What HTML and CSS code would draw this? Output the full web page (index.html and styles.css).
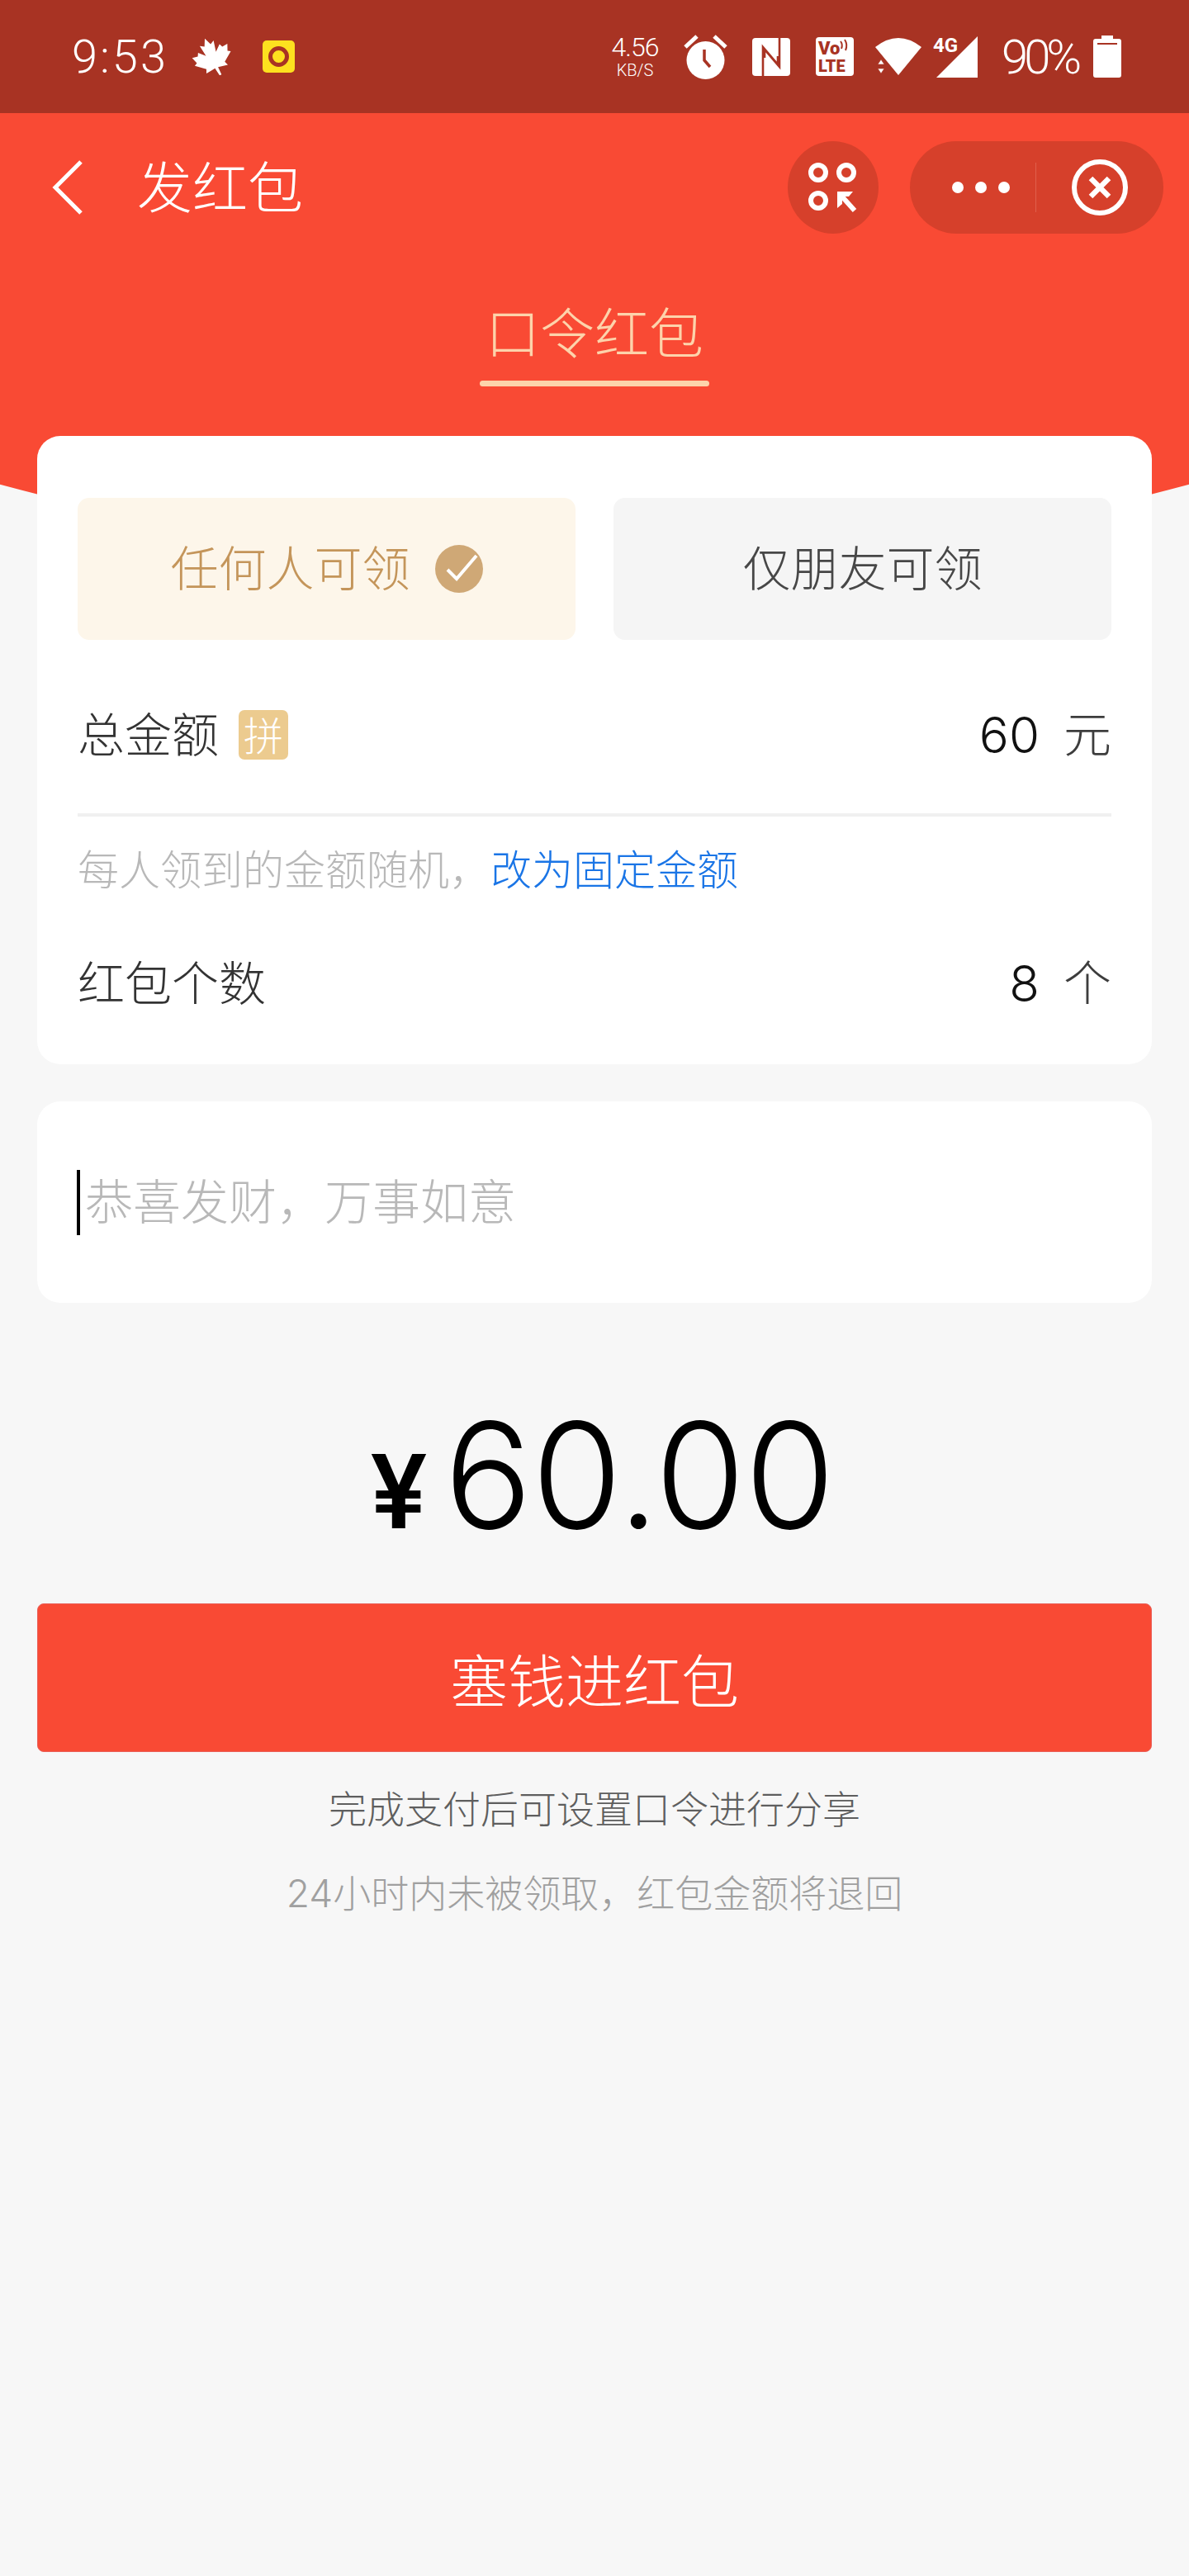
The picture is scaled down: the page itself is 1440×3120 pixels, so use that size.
FILE: index.html
```html
<!DOCTYPE html>
<html lang="zh-CN">
<head>
  <meta charset="UTF-8">
  <meta name="viewport" content="width=device-width, initial-scale=1.0">
  <title>发红包</title>
  <link rel="stylesheet" href="styles.css">
</head>
<body>
  <div class="hero">
    <div class="status">
      <div class="status-left">
        <span class="time">9:53</span>
        <svg class="leaf" viewBox="0 0 100 100"><path transform="rotate(-22 50 50)" d="M50 2 L58 20 L68 14 L63 42 L78 28 L82 36 L96 34 L90 50 L97 54 L74 72 L78 82 L54 78 L55 98 L50 98 L46 78 L22 82 L26 72 L3 54 L10 50 L4 34 L18 36 L22 28 L37 42 L32 14 L42 20 Z"/></svg>
        <svg class="app-dot" viewBox="0 0 39 39"><rect width="39" height="39" rx="5" fill="#fde11f"/><circle cx="19.5" cy="19.5" r="10" fill="#fde11f" stroke="#a83323" stroke-width="5"/></svg>
      </div>
      <div class="status-right">
        <div class="speed"><span class="speed-num">4.56</span><span class="speed-unit">KB/S</span></div>
        <svg class="alarm" viewBox="0 0 53 54"><circle cx="26.5" cy="31" r="23" fill="#fff"/><path d="M2 15 L16 2 M51 15 L37 2" stroke="#fff" stroke-width="5" fill="none"/><path d="M25 18 V31 L32 39" stroke="#a83323" stroke-width="3.5" fill="none"/></svg>
        <svg class="nfc" viewBox="0 0 46 46"><rect width="46" height="46" rx="4" fill="#fff"/><path d="M13 46 V11 L31 32 V22 M33 0 V35 L15 14 V24" stroke="#a83323" stroke-width="2.6" fill="none"/></svg>
        <svg class="volte" viewBox="0 0 46 47"><rect width="46" height="47" rx="4" fill="#fff"/><text x="3" y="21" class="volte-top">Vo</text><path d="M30 5 Q33 9 31 14 M35 3 Q39 9 36 16" stroke="#a83323" stroke-width="2" fill="none"/><text x="3" y="42" class="volte-bottom">LTE</text></svg>
        <svg class="wifi" viewBox="0 0 56 46"><path d="M28 45 L0 11 Q28 -11 56 11 Z" fill="#fff"/><path d="M7 26 L11 32 H3 Z M3 37 H11 L7 43 Z" fill="#fff" stroke="#a83323" stroke-width="0.6"/></svg>
        <div class="signal">
          <svg class="signal-bars" viewBox="0 0 50 50"><path d="M50 0 V50 H0 Z" fill="#fff"/></svg>
          <span class="signal-label">4G</span>
        </div>
        <span class="battery-text">90%</span>
        <svg class="battery" viewBox="0 0 34 51"><path d="M10 0 H24 V4 H31 Q34 4 34 7 V48 Q34 51 31 51 H3 Q0 51 0 48 V7 Q0 4 3 4 H10 Z" fill="#fff"/><rect x="5" y="9" width="24" height="2" fill="#a83323"/></svg>
      </div>
    </div>

    <div class="nav">
      <svg class="back" viewBox="0 0 38 66"><path d="M35 2 L4 33 L35 64" stroke="#fff" stroke-width="5" fill="none"/></svg>
      <span class="nav-title">发红包</span>
      <div class="scan">
        <svg viewBox="0 0 60 60" class="scan-icon"><g fill="none" stroke="#fff" stroke-width="6"><circle cx="12" cy="12" r="9"/><circle cx="46" cy="12" r="9"/><circle cx="12" cy="46" r="9"/><path d="M38 38 L56 58"/></g><path d="M35 35 H54 L49 41 H41 V50 L35 55 Z" fill="#fff"/></svg>
      </div>
      <div class="capsule">
        <div class="dots"><i></i><i></i><i></i></div>
        <div class="capsule-line"></div>
        <svg class="close" viewBox="0 0 68 68"><circle cx="34" cy="34" r="31" fill="none" stroke="#fff" stroke-width="6"/><path d="M23 23 L45 45 M45 23 L23 45" stroke="#fff" stroke-width="6.5"/></svg>
      </div>
    </div>

    <div class="tab">
      <div class="tab-text">口令红包</div>
      <div class="tab-line"></div>
    </div>
  </div>

  <div class="main">
    <div class="card card-form">
      <div class="options">
        <div class="option option-on">
          <span>任何人可领</span>
          <svg class="check" viewBox="0 0 58 58"><circle cx="29" cy="29" r="29" fill="#cfa876"/><path d="M15 30 L26 41 L50 13" stroke="#fff" stroke-width="4" fill="none"/></svg>
        </div>
        <div class="option">仅朋友可领</div>
      </div>
      <div class="row row-amount">
        <span class="row-label">总金额</span>
        <span class="tag">拼</span>
        <span class="row-num">60</span>
        <span class="row-unit">元</span>
      </div>
      <div class="divider"></div>
      <div class="hint">每人领到的金额随机，<span class="hint-link">改为固定金额</span></div>
      <div class="row row-count">
        <span class="row-label">红包个数</span>
        <span class="row-num">8</span>
        <span class="row-unit">个</span>
      </div>
    </div>

    <div class="card card-msg">
      <div class="caret"></div>
      <span class="placeholder">恭喜发财，万事如意</span>
    </div>

    <div class="amount">
      <span class="amount-sign">¥</span>
      <span class="amount-num">60.00</span>
    </div>

    <div class="submit">塞钱进红包</div>
    <p class="note note-first">完成支付后可设置口令进行分享</p>
    <p class="note note-second">24小时内未被领取，红包金额将退回</p>
  </div>
</body>
</html>
```

FILE: styles.css
```css
* {
  box-sizing: border-box;
}
html,
body {
  height: 3120px;
  overflow: hidden;
}
body {
  margin: 0;
  background-color: #f7f7f7;
  color: #333;
  font-family: "Noto Sans CJK SC", sans-serif;
  font-weight: 300;
}
svg {
  display: block;
  flex: none;
}

/* red top area, curved at the bottom */
.hero {
  height: 682px;
  background-color: #f94a34;
  clip-path: circle(2770px at 720px -2088px);
}
.status {
  height: 137px;
  padding: 0 82px 0 87px;
  background-color: #a83323;
  color: #fff;
  display: flex;
  align-items: center;
  justify-content: space-between;
}
.status-left,
.status-right {
  display: flex;
  align-items: center;
}
.time {
  width: 113px;
  font-family: Roboto, sans-serif;
  font-size: 56px;
  letter-spacing: 3px;
  font-weight: 300;
  white-space: nowrap;
}
.leaf {
  width: 50px;
  height: 50px;
  margin-left: 32px;
  fill: #fff;
}
.app-dot {
  width: 39px;
  height: 39px;
  margin-left: 36px;
}
.speed {
  width: 54px;
  display: flex;
  flex-direction: column;
  align-items: center;
  font-family: Roboto, sans-serif;
  font-weight: 300;
}
.speed-num {
  font-size: 32px;
  line-height: 32px;
  letter-spacing: -1px;
}
.speed-unit {
  font-size: 20px;
  line-height: 24px;
}
.alarm {
  width: 53px;
  height: 54px;
  margin-left: 32px;
}
.nfc {
  width: 46px;
  height: 46px;
  margin-left: 30px;
}
.volte {
  width: 46px;
  height: 47px;
  margin-left: 31px;
}
.volte-top,
.volte-bottom {
  font-family: Roboto, sans-serif;
  font-weight: 900;
  fill: #a83323;
}
.volte-top {
  font-size: 22px;
}
.volte-bottom {
  font-size: 20px;
}
.wifi {
  width: 56px;
  height: 46px;
  margin-left: 26px;
}
.signal {
  position: relative;
  width: 54px;
  height: 50px;
  margin-left: 14px;
}
.signal-bars {
  width: 50px;
  height: 50px;
  margin-left: 4px;
}
.signal-label {
  position: absolute;
  left: 0;
  top: -3px;
  font-family: Roboto, sans-serif;
  font-size: 24px;
  line-height: 28px;
  font-weight: 700;
}
.battery-text {
  width: 95px;
  margin-left: 29px;
  font-family: Roboto, sans-serif;
  font-size: 58px;
  letter-spacing: -5px;
  font-weight: 300;
}
.battery {
  width: 34px;
  height: 51px;
  margin-left: 16px;
}

.nav {
  height: 112px;
  margin-top: 34px;
  padding: 0 31px 0 63px;
  display: flex;
  align-items: center;
  color: #fff;
}
.back {
  width: 38px;
  height: 66px;
}
.nav-title {
  margin-left: 65px;
  padding-bottom: 8px;
  font-size: 67px;
  line-height: 112px;
  flex: 1;
}
.scan {
  width: 110px;
  height: 112px;
  border-radius: 50%;
  background-color: #d6402b;
  display: flex;
  align-items: center;
  justify-content: center;
}
.scan-icon {
  width: 60px;
  height: 60px;
}
.capsule {
  width: 307px;
  height: 112px;
  margin-left: 38px;
  border-radius: 56px;
  background-color: #d6402b;
  display: flex;
  align-items: center;
}
.dots {
  width: 152px;
  display: flex;
  justify-content: center;
  gap: 14px;
  padding-left: 20px;
}
.dots i {
  width: 14px;
  height: 14px;
  border-radius: 50%;
  background-color: #fff;
}
.capsule-line {
  width: 1px;
  height: 60px;
  background-color: #e0604c;
}
.close {
  width: 68px;
  height: 68px;
  margin-left: 43px;
}

.tab {
  margin-top: 76px;
  text-align: center;
  color: #fdd3ab;
}
.tab-text {
  font-size: 66px;
  line-height: 80px;
}
.tab-line {
  width: 278px;
  height: 7px;
  margin: 22px auto 0;
  border-radius: 4px;
  background-color: #fdd3ab;
}

.main {
  position: relative;
  margin-top: -154px;
  padding: 0 45px;
}
.card {
  background-color: #fff;
  border-radius: 28px;
}
.card-form {
  padding: 75px 49px 48px;
}
.options {
  display: flex;
  gap: 46px;
}
.option {
  flex: 1;
  height: 172px;
  padding-bottom: 8px;
  border-radius: 14px;
  background-color: #f5f5f5;
  color: #474747;
  font-size: 58px;
  display: flex;
  align-items: center;
  justify-content: center;
}
.option-on {
  background-color: #fdf6ea;
  color: #c4955a;
  gap: 30px;
}
.check {
  width: 58px;
  height: 58px;
  margin-top: 8px;
}
.row {
  height: 100px;
  display: flex;
  align-items: center;
}
.row-amount {
  margin-top: 65px;
}
.row-count {
  margin-top: 56px;
}
.row-label {
  padding-bottom: 8px;
  font-size: 57px;
}
.tag {
  width: 60px;
  height: 60px;
  margin-left: 24px;
  border-radius: 7px;
  background-color: #eccb8f;
  color: #fff;
  font-size: 48px;
  line-height: 56px;
  text-align: center;
}
.row-num {
  margin-left: auto;
  font-family: Inter, sans-serif;
  font-size: 60px;
  color: #111;
}
.row-unit {
  margin-left: 29px;
  padding-bottom: 8px;
  font-size: 58px;
  color: #3d3d3d;
}
.divider {
  height: 4px;
  margin-top: 45px;
  background-color: #f0f0f0;
}
.hint {
  margin-top: 26px;
  font-size: 50px;
  line-height: 70px;
  color: #b8b8b8;
}
.hint-link {
  color: #1a75e6;
}

.card-msg {
  height: 244px;
  margin-top: 45px;
  padding-left: 48px;
  display: flex;
  align-items: center;
}
.caret {
  width: 4px;
  height: 79px;
  background-color: #000;
}
.placeholder {
  margin-left: 6px;
  padding-bottom: 8px;
  font-size: 58px;
  color: #b8b8b8;
}

.amount {
  height: 364px;
  padding-top: 109px;
  padding-left: 19px;
  display: flex;
  align-items: baseline;
  justify-content: center;
  font-family: Inter, sans-serif;
  color: #000;
  line-height: 200px;
}
.amount-sign {
  font-size: 124px;
  font-weight: 600;
}
.amount-num {
  margin-left: 20px;
  font-size: 177px;
  font-weight: 300;
  letter-spacing: -0.5px;
}

.submit {
  height: 180px;
  border-radius: 8px;
  background-color: #f94a34;
  border: 1px solid #ea5f58;
  color: #fff;
  font-size: 70px;
  display: flex;
  align-items: center;
  justify-content: center;
}
.note {
  margin: 0;
  font-size: 46px;
  line-height: 60px;
  text-align: center;
}
.note-first {
  margin-top: 36px;
  color: #5e5e5e;
}
.note-second {
  margin-top: 45px;
  font-family: Inter, "Noto Sans CJK SC", sans-serif;
  color: #a0a0a0;
}
```
